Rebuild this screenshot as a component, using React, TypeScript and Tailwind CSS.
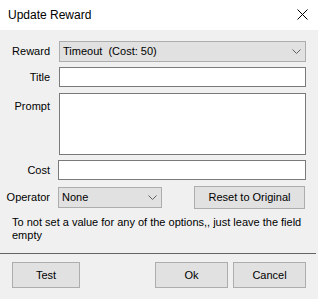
import React from "react";

function Chevron() {
  return (
    <svg width="9" height="5" viewBox="0 0 9 5" className="shrink-0">
      <path d="M0.5 0.5 L4.5 4.5 L8.5 0.5" fill="none" stroke="#606060" strokeWidth="1" />
    </svg>
  );
}

function Combo({ value, className }: { value: string; className: string }) {
  return (
    <div
      className={`flex items-center justify-between h-[21px] border border-[#adadad] bg-[#e1e1e1] pl-[3px] pr-[4px] ${className}`}
    >
      <span className="whitespace-pre leading-none">{value}</span>
      <Chevron />
    </div>
  );
}

function Field({ label, children, gap = "ml-[8px]" }: { label: string; children: React.ReactNode; gap?: string }) {
  return (
    <div className="flex items-center">
      <span className="w-[51px] pr-[1px] text-right shrink-0">{label}</span>
      <div className={`${gap} flex-1`}>{children}</div>
    </div>
  );
}

const buttonClass =
  "flex items-center justify-center border border-[#adadad] bg-[#e1e1e1] text-black";

export default function App() {
  return (
    <div className="w-[318px] h-[299px] bg-[#f0f0f0] text-[11px] text-black font-['Liberation_Sans',Arial,sans-serif] overflow-hidden">
      <div className="h-[30px] bg-white flex items-start justify-between pl-[8px] pr-[10px]">
        <span className="text-[12px] leading-none pt-[9px]">Update Reward</span>
        <svg width="11" height="11" viewBox="0 0 11 11" className="mt-[9px]">
          <path d="M0.5 0.5 L10.5 10.5 M10.5 0.5 L0.5 10.5" stroke="#000" strokeWidth="1" />
        </svg>
      </div>

      <div className="flex flex-col pr-[12px]">
        <div className="mt-[11px]">
          <Field label="Reward">
            <Combo value="Timeout  (Cost: 50)" className="w-full" />
          </Field>
        </div>
        <div className="mt-[5px]">
          <Field label="Title">
            <div className="h-[20px] border border-[#7a7a7a] bg-white" />
          </Field>
        </div>
        <div className="mt-[6px] flex items-start">
          <span className="w-[51px] pr-[1px] text-right shrink-0 pt-[5px]">Prompt</span>
          <div className="ml-[8px] flex-1 h-[62px] border border-[#7a7a7a] bg-white" />
        </div>
        <div className="mt-[5px]">
          <Field label="Cost" gap="ml-[7px]">
            <div className="h-[20px] border border-[#7a7a7a] bg-white" />
          </Field>
        </div>
        <div className="mt-[6px] flex items-center">
          <span className="w-[51px] pr-[1px] text-right shrink-0">Operator</span>
          <Combo value="None" className="ml-[7px] w-[104px]" />
          <button type="button" className={`${buttonClass} ml-[32px] w-[111px] h-[23px]`}>
            Reset to Original
          </button>
        </div>
      </div>

      <p className="mt-[7px] pl-[12px] pr-[12px] leading-[13px]">
        To not set a value for any of the options,, just leave the field
        <br />
        empty
      </p>

      <div className="mt-[11px] h-px w-[316px] bg-[#646464]" />

      <div className="mt-[8px] flex px-[12px]">
        <button type="button" className={`${buttonClass} w-[68px] h-[26px]`}>
          Test
        </button>
        <div className="ml-auto flex gap-[5px]">
          <button type="button" className={`${buttonClass} w-[73px] h-[26px]`}>
            Ok
          </button>
          <button type="button" className={`${buttonClass} w-[73px] h-[26px]`}>
            Cancel
          </button>
        </div>
      </div>
    </div>
  );
}
